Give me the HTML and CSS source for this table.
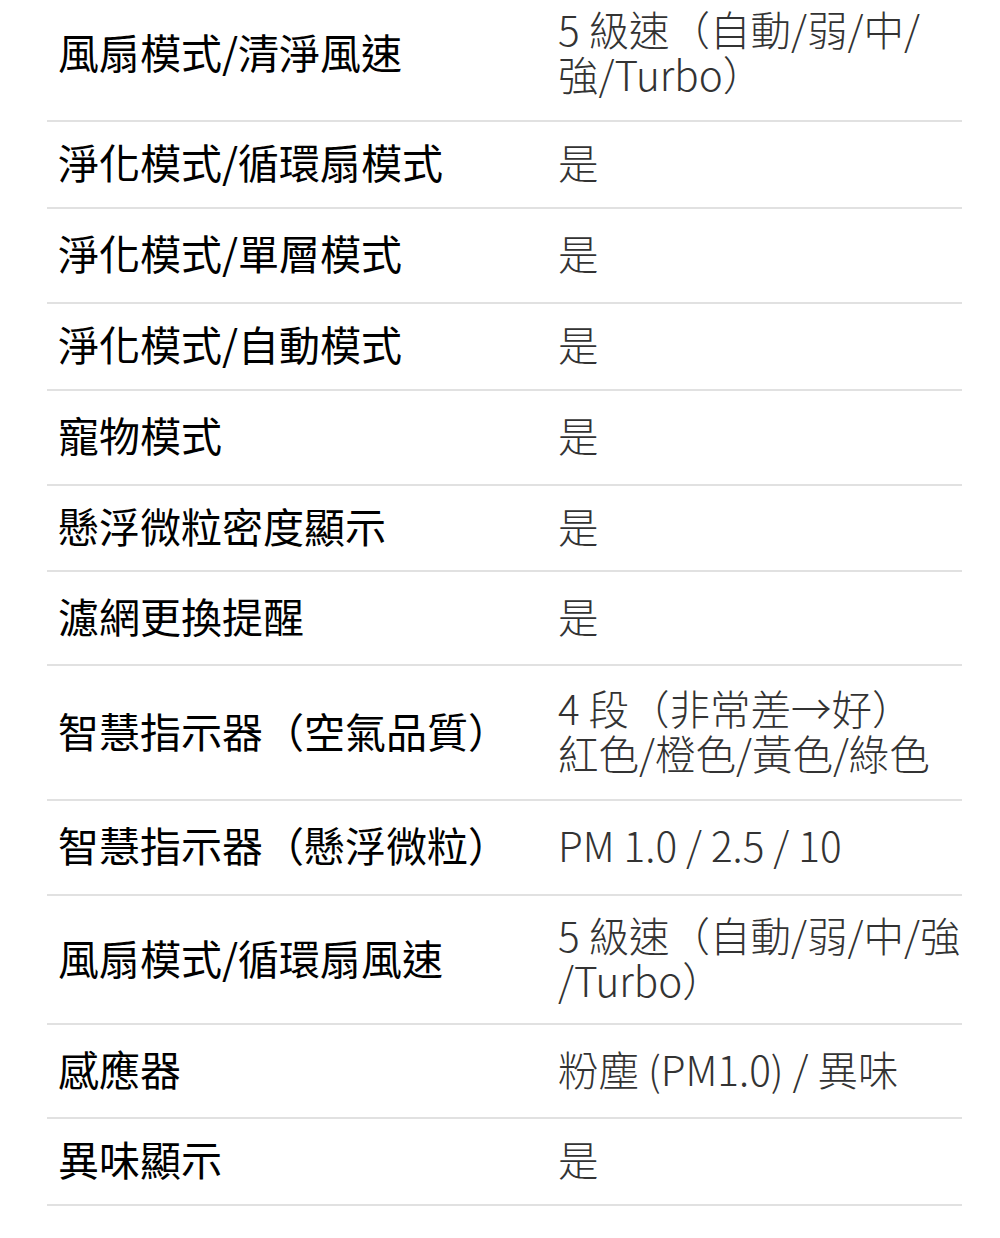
FILE: index.html
```html
<!DOCTYPE html>
<html lang="zh-Hant">
<head>
<meta charset="utf-8">
<title>規格</title>
<link rel="stylesheet" href="styles.css">
</head>
<body>
<div class="spec">
  <div class="row first"><div class="k">風扇模式/清淨風速</div><div class="v">5 級速（自動/弱/中/<br>強/Turbo）</div></div>
  <div class="row short"><div class="k">淨化模式/循環扇模式</div><div class="v">是</div></div>
  <div class="row"><div class="k">淨化模式/單層模式</div><div class="v">是</div></div>
  <div class="row short"><div class="k">淨化模式/自動模式</div><div class="v">是</div></div>
  <div class="row"><div class="k">寵物模式</div><div class="v">是</div></div>
  <div class="row shorter"><div class="k">懸浮微粒密度顯示</div><div class="v">是</div></div>
  <div class="row mid"><div class="k">濾網更換提醒</div><div class="v">是</div></div>
  <div class="row double"><div class="k">智慧指示器（空氣品質）</div><div class="v">4 段（非常差→好）<br>紅色/橙色/黃色/綠色</div></div>
  <div class="row"><div class="k">智慧指示器（懸浮微粒）</div><div class="v">PM 1.0 / 2.5 / 10</div></div>
  <div class="row double tight"><div class="k">風扇模式/循環扇風速</div><div class="v">5 級速（自動/弱/中/強<br>/Turbo）</div></div>
  <div class="row mid"><div class="k">感應器</div><div class="v">粉塵 (PM1.0) / 異味</div></div>
  <div class="row short"><div class="k">異味顯示</div><div class="v">是</div></div>
</div>
</body>
</html>
```
FILE: styles.css
```css
html, body {
  margin: 0;
  padding: 0;
  background: #ffffff;
}
body {
  font-family: "Noto Sans CJK TC", "Noto Sans", sans-serif;
  overflow: hidden;
}
.spec {
  margin: -18px 38px 0 47px;
}
.row {
  display: grid;
  grid-template-columns: 511px 1fr;
  align-items: center;
  padding: 21px 0 27px;
  border-bottom: 2px solid #e1e1e1;
}
.row.first {
  padding: 24px 0 24px;
}
.row.mid {
  padding: 21px 0 26px;
}
.row.short {
  padding: 17px 0 23px;
}
.row.shorter {
  padding: 17px 0 22px;
}
.row.double {
  padding: 19px 0 24px;
}
.row.double.tight {
  padding: 16px 0 21px;
}
.k {
  padding-left: 11px;
  font-size: 41px;
  line-height: 45px;
  font-weight: 400;
  color: #000000;
  white-space: nowrap;
}
.v {
  font-size: 40.5px;
  line-height: 45px;
  font-weight: 300;
  color: #333333;
  white-space: nowrap;
}
```
